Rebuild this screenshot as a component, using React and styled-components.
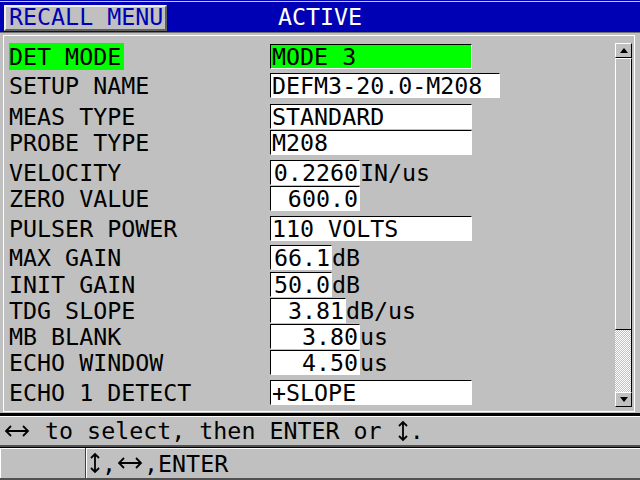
import React from "react";
import styled, { createGlobalStyle } from "styled-components";

const Global = createGlobalStyle`
  html, body { margin: 0; padding: 0; background: #c0c0c0; }
  body { overflow: hidden; }
`;

const Screen = styled.div`
  width: 640px;
  height: 480px;
  display: flex;
  flex-direction: column;
  background: #c0c0c0;
  color: #000;
  font-family: "DejaVu Sans Mono", "Liberation Mono", monospace;
  font-size: 23.3px;
`;

const TopBar = styled.header`
  box-sizing: border-box;
  height: 33px;
  flex: none;
  display: grid;
  grid-template-columns: 1fr auto 1fr;
  align-items: end;
  padding: 0 4px 1px;
  background: linear-gradient(#0000b4 0 1px, #c8c8e8 1px 2px, #0000b4 2px);
  border-bottom: 1px solid #707070;
`;

const MenuButton = styled.div`
  justify-self: start;
  box-sizing: border-box;
  height: 26px;
  padding: 0 2px 0 3px;
  border: 2px solid;
  border-color: #f0f0f0 #606060 #606060 #f0f0f0;
  background: #c0c0c0;
  color: #0000b4;
  line-height: 20px;
  white-space: pre;
`;

const Title = styled.div`
  color: #fff;
  line-height: 26px;
  margin-bottom: 1px;
`;

const Panel = styled.main`
  box-sizing: border-box;
  height: 380px;
  flex: none;
  padding: 2px 5px 1px 3px;
  display: flex;
`;

const Frame = styled.div`
  flex: 1;
  border: 1px solid #fff;
  display: grid;
  grid-template-columns: 1fr 17px;
  padding: 7px 2px 4px 5px;
`;

const Form = styled.div`
  display: flex;
  flex-direction: column;
  padding-top: 1px;
`;

const Row = styled.div`
  height: ${(p) => p.$h}px;
  flex: none;
  display: grid;
  grid-template-columns: 261px auto auto;
  justify-content: start;
  align-items: start;
`;

const Label = styled.div`
  justify-self: start;
  margin-top: -1px;
  padding-right: 3px;
  line-height: 27px;
  white-space: pre;
  background: ${(p) => (p.$active ? "#00ff00" : "transparent")};
`;

const Field = styled.div`
  box-sizing: border-box;
  width: ${(p) => p.$w}px;
  height: 25px;
  padding: 0 1px;
  border: 1px solid;
  border-color: #000 #fff #fff #000;
  background: ${(p) => (p.$active ? "#00ff00" : "#fff")};
  line-height: 23px;
  text-align: ${(p) => p.$align};
  white-space: pre;
  overflow: hidden;
`;

const Unit = styled.div`
  line-height: 25px;
  white-space: pre;
`;

const Scroll = styled.div`
  display: flex;
  flex-direction: column;
`;

const ScrollButton = styled.div`
  box-sizing: border-box;
  height: 15px;
  flex: none;
  border: 1px solid;
  border-color: #fff #000 #000 #fff;
  display: flex;
  align-items: center;
  justify-content: center;
`;

const Thumb = styled.div`
  box-sizing: border-box;
  height: 272px;
  flex: none;
  border: 1px solid;
  border-color: #fff #000 #000 #fff;
  box-shadow: inset -1px 0 #e8e8e8;
`;

const Track = styled.div`
  flex: 1;
  border-right: 1px solid #000;
  background: repeating-conic-gradient(#fff 0 25%, #c0c0c0 0 50%) 0 0 / 2px 2px;
`;

const HintBar = styled.div`
  box-sizing: border-box;
  height: 34px;
  flex: none;
  border-top: 3px solid #000;
  border-bottom: 2px solid #505050;
  box-shadow: inset 0 1px #fff;
  padding-left: 3px;
  display: flex;
  align-items: center;
  white-space: pre;
`;

const KeyBar = styled.div`
  box-sizing: border-box;
  height: 33px;
  flex: none;
  border-top: 1px solid #000;
  border-bottom: 2px solid #505050;
  display: grid;
  grid-template-columns: 86px 1fr;
`;

const KeyCell = styled.div`
  box-shadow: inset 1px 1px #fff;
  border-right: ${(p) => (p.$first ? "1px solid #404040" : "none")};
  padding-left: 2px;
  display: flex;
  align-items: center;
  white-space: pre;
`;

const Glyph = styled.svg`
  flex: none;
  display: block;
`;

const HArrow = () => (
  <Glyph width="28" height="20" viewBox="0 0 28 20">
    <path d="M3 10H25M8 5L3 10L8 15M20 5L25 10L20 15" stroke="#000" strokeWidth="1.8" fill="none" />
  </Glyph>
);

const VArrow = () => (
  <Glyph width="14" height="22" viewBox="0 0 14 22">
    <path d="M7 2V20M3 6L7 2L11 6M3 16L7 20L11 16" stroke="#000" strokeWidth="1.8" fill="none" />
  </Glyph>
);

const Tri = ({ down }) => (
  <Glyph width="8" height="5" viewBox="0 0 8 5">
    <polygon points={down ? "0,0 8,0 4,5" : "0,5 8,5 4,0"} fill="#000" />
  </Glyph>
);

const rows = [
  { label: "DET MODE", value: "MODE 3", w: 202, h: 29, active: true },
  { label: "SETUP NAME", value: "DEFM3-20.0-M208", w: 230, h: 31 },
  { label: "MEAS TYPE", value: "STANDARD", w: 202, h: 26 },
  { label: "PROBE TYPE", value: "M208", w: 202, h: 30 },
  { label: "VELOCITY", value: "0.2260", w: 90, h: 26, unit: "IN/us", right: true },
  { label: "ZERO VALUE", value: "600.0", w: 90, h: 30, right: true },
  { label: "PULSER POWER", value: "110 VOLTS", w: 202, h: 29 },
  { label: "MAX GAIN", value: "66.1", w: 62, h: 27, unit: "dB", right: true },
  { label: "INIT GAIN", value: "50.0", w: 62, h: 26, unit: "dB", right: true },
  { label: "TDG SLOPE", value: "3.81", w: 76, h: 26, unit: "dB/us", right: true },
  { label: "MB BLANK", value: "3.80", w: 90, h: 26, unit: "us", right: true },
  { label: "ECHO WINDOW", value: "4.50", w: 90, h: 30, unit: "us", right: true },
  { label: "ECHO 1 DETECT", value: "+SLOPE", w: 202, h: 25 },
];

export default function App() {
  return (
    <Screen>
      <Global />
      <TopBar>
        <MenuButton>RECALL MENU</MenuButton>
        <Title>ACTIVE</Title>
      </TopBar>
      <Panel>
        <Frame>
          <Form>
            {rows.map((r) => (
              <Row key={r.label} $h={r.h}>
                <Label $active={r.active}>{r.label}</Label>
                <Field $w={r.w} $active={r.active} $align={r.right ? "right" : "left"}>
                  {r.value}
                </Field>
                {r.unit && <Unit>{r.unit}</Unit>}
              </Row>
            ))}
          </Form>
          <Scroll>
            <ScrollButton>
              <Tri />
            </ScrollButton>
            <Thumb />
            <Track />
            <ScrollButton>
              <Tri down />
            </ScrollButton>
          </Scroll>
        </Frame>
      </Panel>
      <HintBar>
        <HArrow />
        {" to select, then ENTER or "}
        <VArrow />
        .
      </HintBar>
      <KeyBar>
        <KeyCell $first />
        <KeyCell>
          <VArrow />,<HArrow />,ENTER
        </KeyCell>
      </KeyBar>
    </Screen>
  );
}
